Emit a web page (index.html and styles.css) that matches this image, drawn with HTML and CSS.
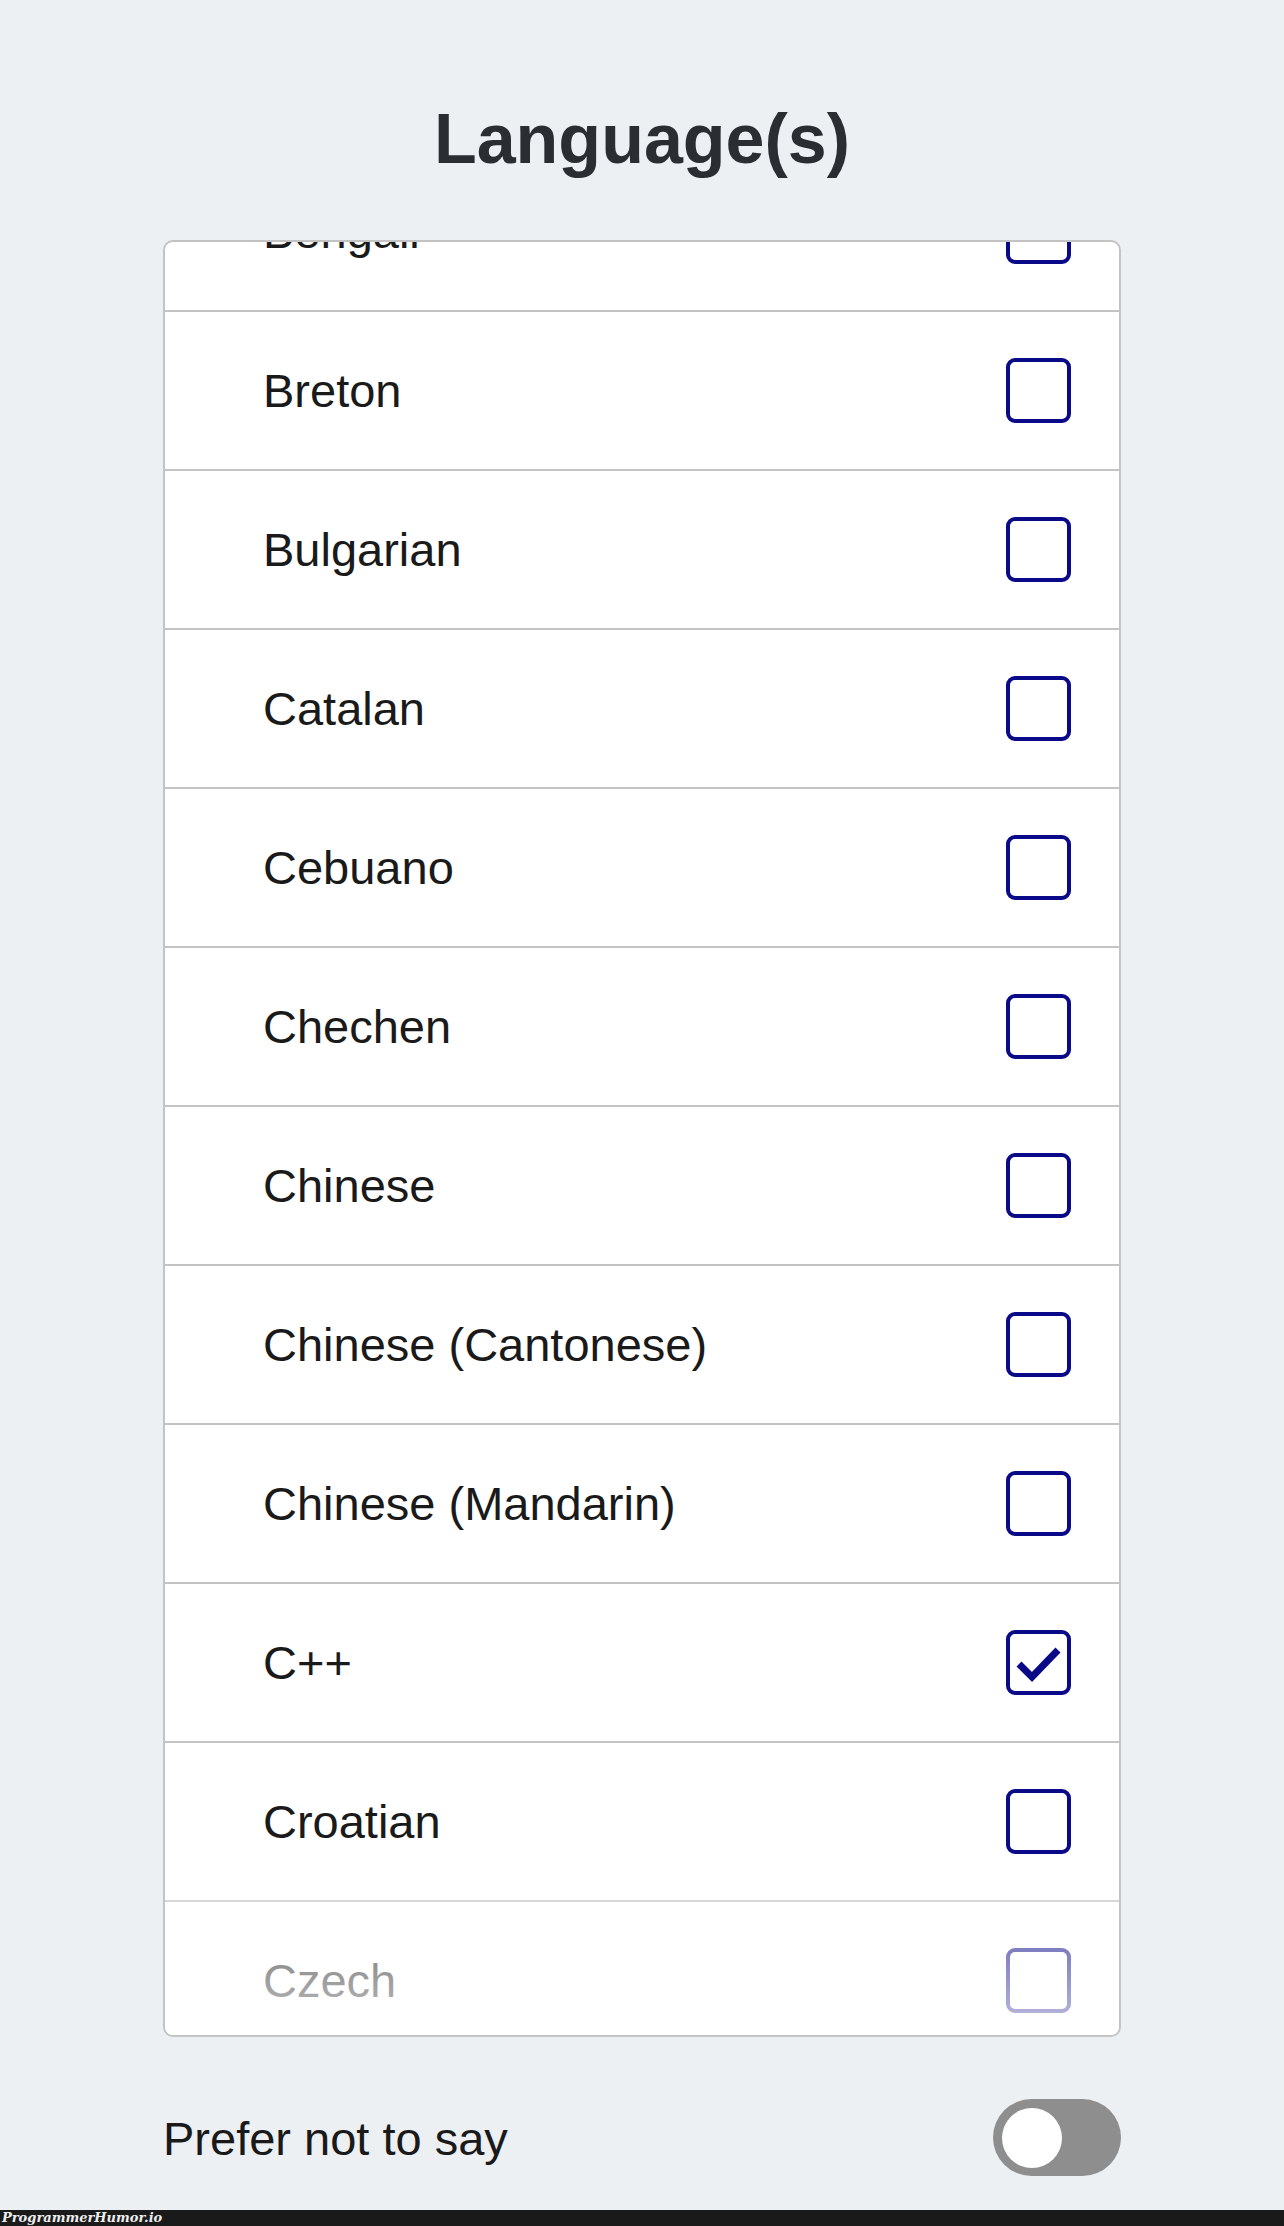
FILE: index.html
```html
<!DOCTYPE html>
<html lang="en">

<head>
	<meta charset="utf-8">
	<title>Language(s)</title>
	<link rel="stylesheet" href="styles.css">
</head>

<body>
	<div class="page">
		<h1 class="title">Language(s)</h1>

		<div class="picker">
			<ul class="lang-list">
				<li class="lang-row"><span class="lang-name">Bengali</span><span class="check"></span></li>
				<li class="lang-row"><span class="lang-name">Breton</span><span class="check"></span></li>
				<li class="lang-row"><span class="lang-name">Bulgarian</span><span class="check"></span></li>
				<li class="lang-row"><span class="lang-name">Catalan</span><span class="check"></span></li>
				<li class="lang-row"><span class="lang-name">Cebuano</span><span class="check"></span></li>
				<li class="lang-row"><span class="lang-name">Chechen</span><span class="check"></span></li>
				<li class="lang-row"><span class="lang-name">Chinese</span><span class="check"></span></li>
				<li class="lang-row"><span class="lang-name">Chinese (Cantonese)</span><span class="check"></span></li>
				<li class="lang-row"><span class="lang-name">Chinese (Mandarin)</span><span class="check"></span></li>
				<li class="lang-row">
					<span class="lang-name">C++</span>
					<span class="check checked">
						<svg viewBox="0 0 57 57" width="57" height="57">
							<polyline points="9,30 22,43 48,16" fill="none" stroke="#0a0a88" stroke-width="7" />
						</svg>
					</span>
				</li>
				<li class="lang-row"><span class="lang-name">Croatian</span><span class="check"></span></li>
				<li class="lang-row"><span class="lang-name">Czech</span><span class="check"></span></li>
			</ul>
			<div class="fade"></div>
		</div>

		<div class="prefer-row">
			<span class="prefer-label">Prefer not to say</span>
			<span class="toggle"><span class="knob"></span></span>
		</div>
	</div>

	<div class="watermark">ProgrammerHumor.io</div>
</body>

</html>
```

FILE: styles.css
```css
/* common css */
* {
	margin: 0;
	padding: 0;
	box-sizing: border-box;
}

body {
	font-family: 'Liberation Sans', Arial, sans-serif;
	background-color: #ecf0f3;
	color: #1a1a1a;
	width: 1284px;
}

/* title */
.page {
	padding-top: 99px;
}

.title {
	font-size: 70px;
	line-height: 80px;
	font-weight: bold;
	text-align: center;
	color: #2a2e33;
	margin-bottom: 61px;
}

/* language picker */
.picker {
	position: relative;
	margin: 0 163px;
	height: 1797px;
	border: 2px solid #c3c3c3;
	border-radius: 10px;
	background-color: #fff;
	overflow: hidden;
}

.lang-list {
	list-style: none;
	margin-top: -89px;
}

.lang-row {
	display: flex;
	align-items: center;
	justify-content: space-between;
	height: 159px;
	padding: 0 48px 0 98px;
	border-bottom: 2px solid #c3c3c3;
}

.lang-name {
	font-size: 47px;
}

.check {
	display: block;
	width: 65px;
	height: 65px;
	border: 4px solid #0a0a88;
	border-radius: 9px;
}

.check svg {
	display: block;
}

/* bottom of the list fades out */
.fade {
	position: absolute;
	left: 0;
	right: 0;
	bottom: 0;
	height: 140px;
	background: linear-gradient(rgba(255, 255, 255, 0.3), rgba(255, 255, 255, 0.75));
}

/* prefer not to say */
.prefer-row {
	display: flex;
	align-items: center;
	justify-content: space-between;
	margin: 62px 163px 0 163px;
	height: 77px;
}

.prefer-label {
	font-size: 47px;
	line-height: 1;
	margin-top: 2px;
}

.toggle {
	display: flex;
	align-items: center;
	width: 128px;
	height: 77px;
	border-radius: 39px;
	background-color: #8e8e8e;
	padding-left: 9px;
}

.knob {
	width: 60px;
	height: 60px;
	border-radius: 50%;
	background-color: #fff;
}

/* watermark bar */
.watermark {
	margin-top: 34px;
	height: 16px;
	background-color: #1a1a1a;
	color: #eee;
	font-family: 'DejaVu Serif', serif;
	font-style: italic;
	font-weight: bold;
	font-size: 13px;
	line-height: 16px;
	padding-left: 2px;
}
```
